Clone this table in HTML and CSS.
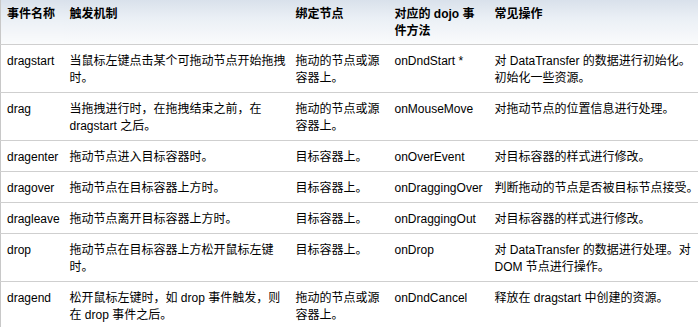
FILE: index.html
```html
<!DOCTYPE html>
<html lang="zh">
<head>
<meta charset="utf-8">
<link rel="stylesheet" href="styles.css">
</head>
<body>
<table class="events">
  <colgroup>
    <col class="c1"><col class="c2"><col class="c3"><col class="c4"><col class="c5">
  </colgroup>
  <thead>
    <tr>
      <th>事件名称</th>
      <th>触发机制</th>
      <th>绑定节点</th>
      <th class="method">对应的 dojo 事件方法</th>
      <th>常见操作</th>
    </tr>
  </thead>
  <tbody>
    <tr>
      <td>dragstart</td>
      <td>当鼠标左键点击某个可拖动节点开始拖拽时。</td>
      <td>拖动的节点或源容器上。</td>
      <td>onDndStart *</td>
      <td>对 DataTransfer 的数据进行初始化。<br>初始化一些资源。</td>
    </tr>
    <tr>
      <td>drag</td>
      <td>当拖拽进行时，在拖拽结束之前，在 dragstart 之后。</td>
      <td>拖动的节点或源容器上。</td>
      <td>onMouseMove</td>
      <td>对拖动节点的位置信息进行处理。</td>
    </tr>
    <tr>
      <td>dragenter</td>
      <td>拖动节点进入目标容器时。</td>
      <td>目标容器上。</td>
      <td>onOverEvent</td>
      <td>对目标容器的样式进行修改。</td>
    </tr>
    <tr>
      <td>dragover</td>
      <td>拖动节点在目标容器上方时。</td>
      <td>目标容器上。</td>
      <td>onDraggingOver</td>
      <td>判断拖动的节点是否被目标节点接受。</td>
    </tr>
    <tr>
      <td>dragleave</td>
      <td>拖动节点离开目标容器上方时。</td>
      <td>目标容器上。</td>
      <td>onDraggingOut</td>
      <td>对目标容器的样式进行修改。</td>
    </tr>
    <tr>
      <td>drop</td>
      <td>拖动节点在目标容器上方松开鼠标左键时。</td>
      <td>目标容器上。</td>
      <td>onDrop</td>
      <td>对 DataTransfer 的数据进行处理。对 DOM 节点进行操作。</td>
    </tr>
    <tr>
      <td>dragend</td>
      <td>松开鼠标左键时，如 drop 事件触发，则在 drop 事件之后。</td>
      <td>拖动的节点或源容器上。</td>
      <td>onDndCancel</td>
      <td>释放在 dragstart 中创建的资源。</td>
    </tr>
  </tbody>
</table>
</body>
</html>
```
FILE: styles.css
```css
html, body {
  margin: 0;
  padding: 0;
  background: #ffffff;
  overflow: hidden;
}

.events {
  border-collapse: collapse;
  table-layout: fixed;
  width: 702px;
  font-family: "Liberation Sans", "Noto Sans CJK SC", sans-serif;
  font-size: 12px;
  line-height: 17px;
  color: #000000;
  border-left: 1px solid #c8c8c8;
}

.c1 { width: 63px; }
.c2 { width: 226px; }
.c3 { width: 99px; }
.c4 { width: 100px; }
.c5 { width: 214px; }

.events th {
  text-align: left;
  vertical-align: top;
  font-weight: bold;
  padding: 6px 2px 4px 6px;
  height: 34px;
  background: linear-gradient(to bottom, #d9e1eb 0%, #eaeff5 40%, #fafbfc 100%);
}

.events th.method {
  padding-right: 10px;
}

.events td {
  vertical-align: top;
  padding: 8px 2px 5px 6px;
  border-top: 1px solid #cfcfcf;
}

.events td:last-child,
.events th:last-child {
  padding-right: 4px;
}
```
